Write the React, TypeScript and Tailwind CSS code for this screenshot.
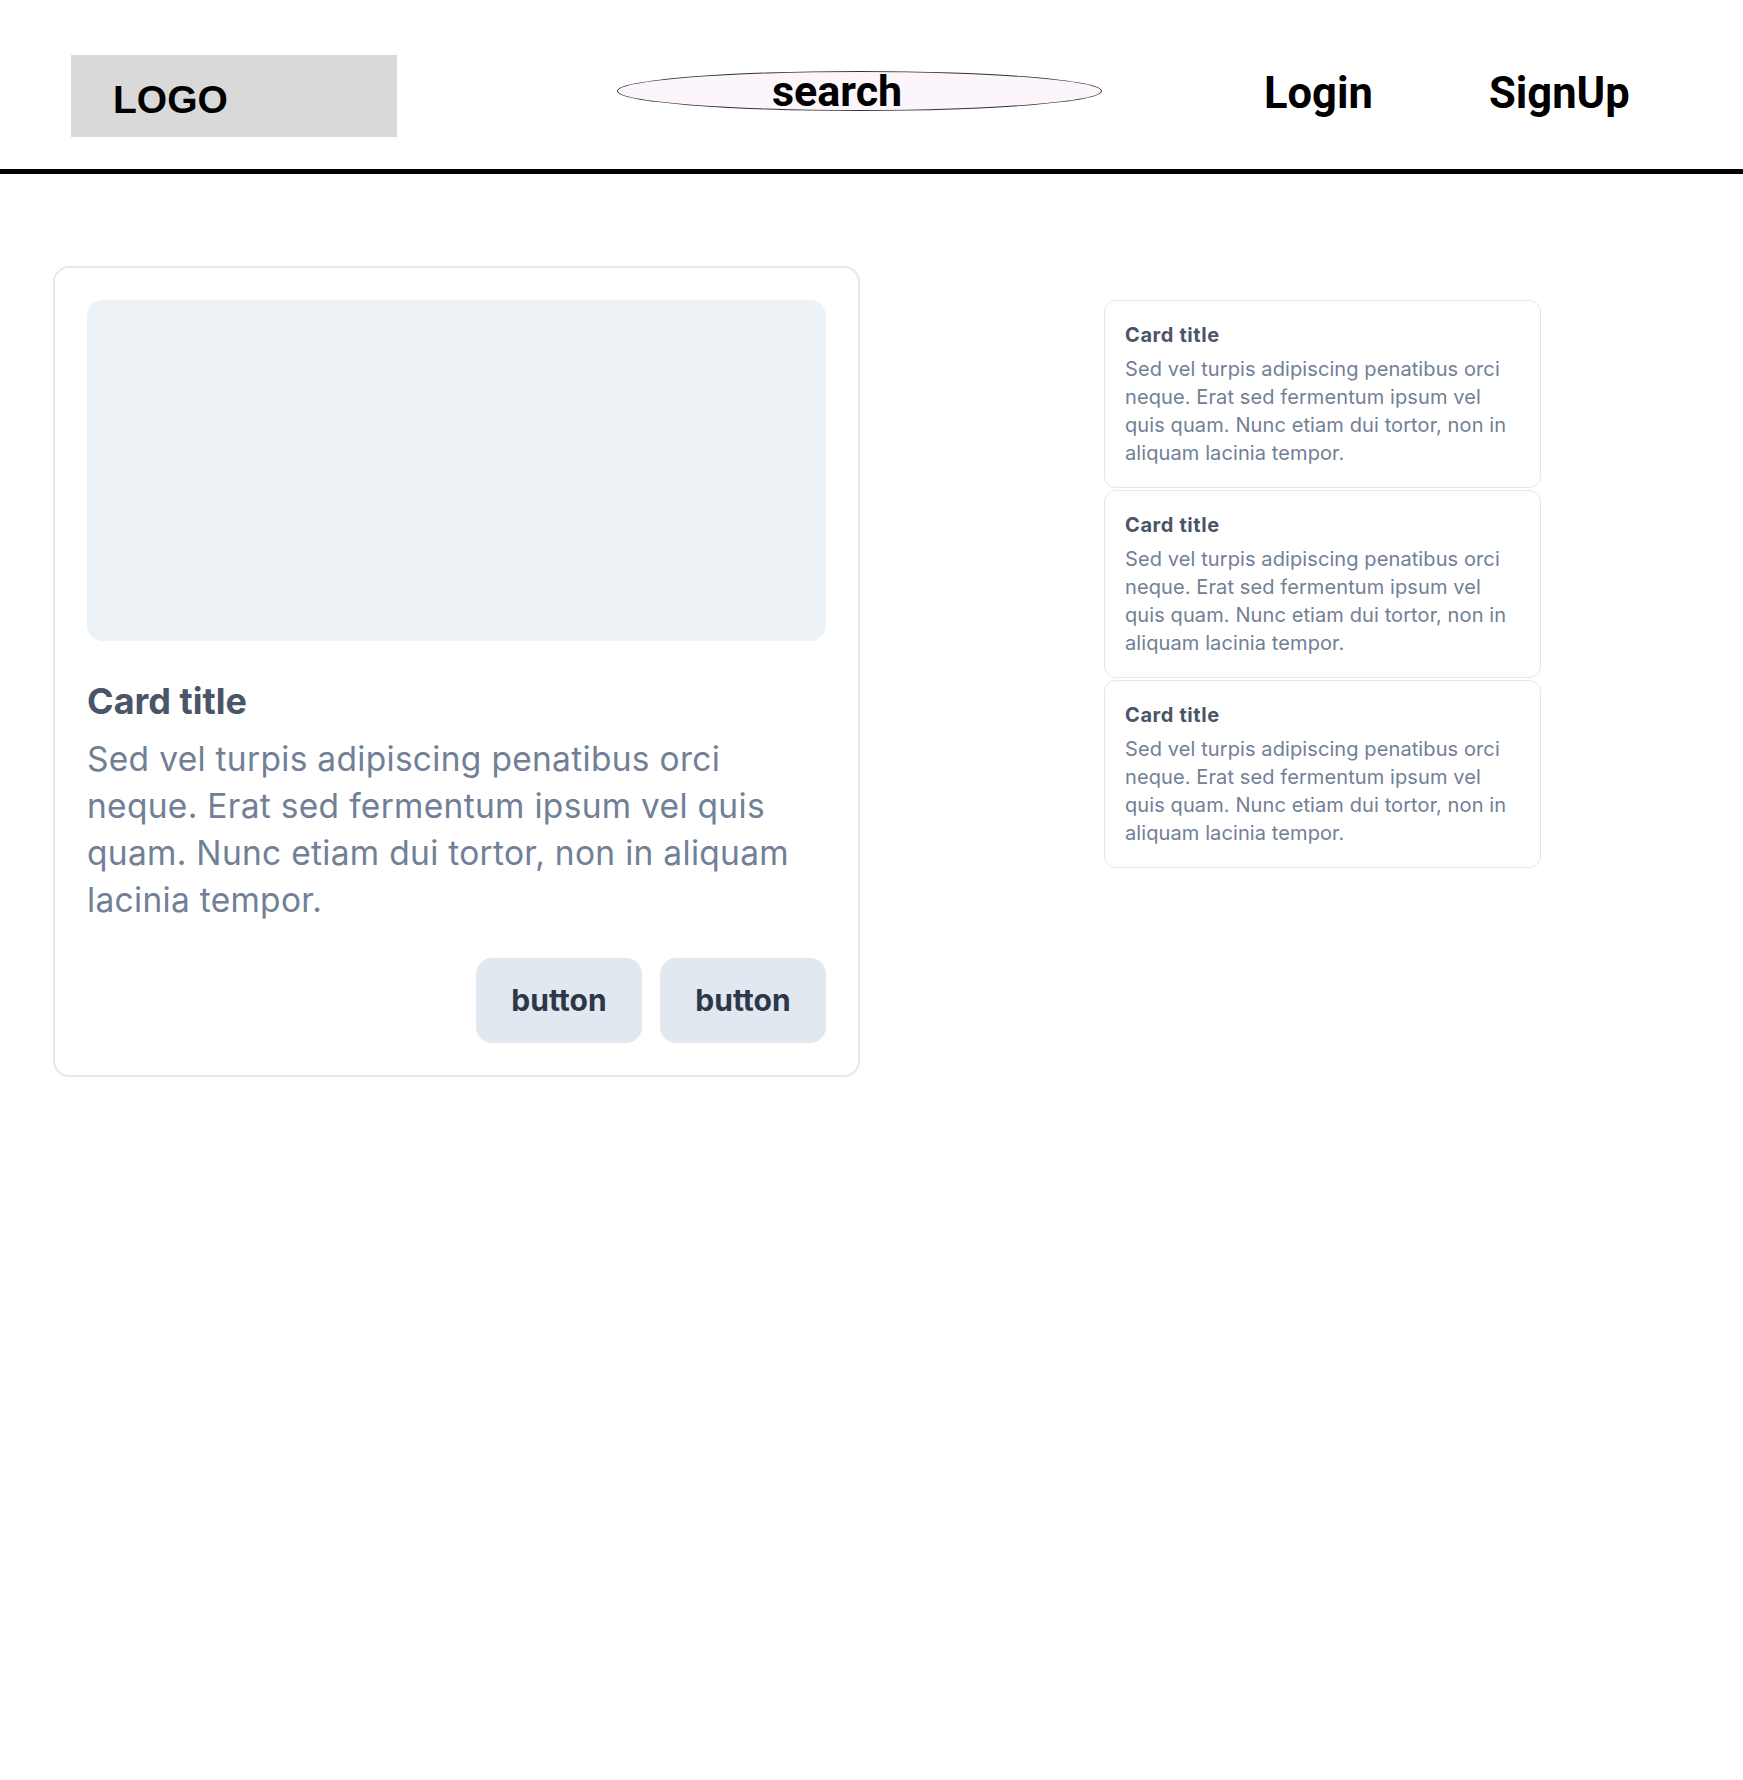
const body =
  'Sed vel turpis adipiscing penatibus orci neque. Erat sed fermentum ipsum vel quis quam. Nunc etiam dui tortor, non in aliquam lacinia tempor.';

const SmallCard = () => (
  <div className="rounded-xl border border-[#e2e8f0] bg-white p-[20px]">
    <h3 className="text-[20px] leading-[28px] font-bold tracking-[0.6px] text-[#4a5568]">Card title</h3>
    <p className="mt-[6px] text-[20px] leading-[28px] tracking-[0.1px] text-[#718096]">{body}</p>
  </div>
);

const App = () => {
  return (
    <div className="min-h-[1780px] w-full bg-white font-['Inter',sans-serif]">
      {/* header */}
      <header className="flex h-[174px] items-start border-b-[5px] border-black pt-[55px] font-['Roboto',sans-serif] font-bold text-black">
        <div className="ml-[71px] h-[82px] w-[326px] shrink-0 bg-[#d9d9d9] pl-[42px] pt-[24px] font-['Liberation_Sans',sans-serif] text-[39px] leading-[41px]">
          LOGO
        </div>
        <div className="ml-[220px] mt-[16px] h-[40px] w-[485px] shrink-0 rounded-[50%] border border-[#333] bg-[#fcf5fc] pl-[154px]">
          <div className="-mt-[2px] text-[43px] leading-[43px]">search</div>
        </div>
        <div className="ml-[162px] mt-[17px] w-[225px] shrink-0 text-[43.5px] leading-[44px]">Login</div>
        <div className="mt-[17px] shrink-0 text-[43.5px] leading-[44px]">SignUp</div>
      </header>

      <main className="flex items-start pl-[53px] pt-[92px]">
        <div className="w-[807px] shrink-0 rounded-2xl border-2 border-[#e2e8f0] bg-white p-[32px]">
          <div className="h-[341px] w-full rounded-2xl bg-[#edf2f7]" />
          <h2 className="mt-[38px] text-[36px] leading-[44px] font-bold text-[#4a5568]">Card title</h2>
          <p className="mt-[13px] text-[33.5px] leading-[47px] tracking-[0.3px] text-[#718096]">{body}</p>
          <div className="mt-[34px] flex justify-end gap-[18px]">
            <button className="h-[85px] w-[166px] rounded-2xl bg-[#e2e8f0] text-[30px] font-bold text-[#2d3748]">button</button>
            <button className="h-[85px] w-[166px] rounded-2xl bg-[#e2e8f0] text-[30px] font-bold text-[#2d3748]">button</button>
          </div>
        </div>

        <div className="ml-[244px] mt-[34px] flex w-[437px] shrink-0 flex-col gap-[2px]">
          <SmallCard />
          <SmallCard />
          <SmallCard />
        </div>
      </main>
    </div>
  );
};

export default App;
